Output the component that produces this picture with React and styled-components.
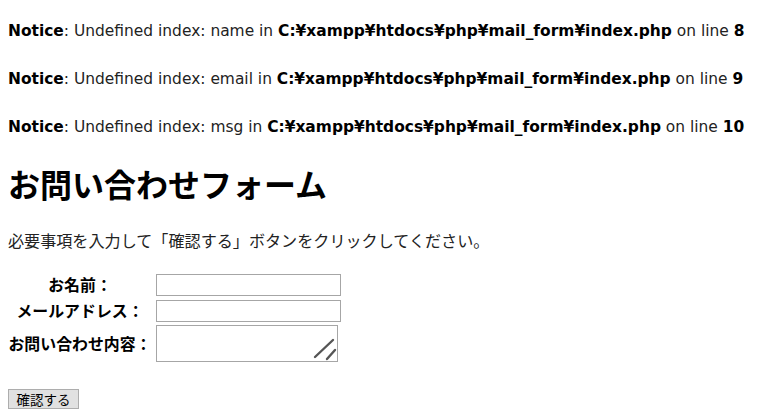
import React from 'react'
import styled, { createGlobalStyle } from 'styled-components'

const GlobalStyle = createGlobalStyle`
  html, body { margin: 0; padding: 0; background: #fff; }
  body {
    font-family: "DejaVu Sans", "Noto Sans CJK JP", sans-serif;
    color: #000;
  }
`

const Page = styled.main`
  padding: 19px 8px 8px;
`

const Notice = styled.div`
  font-size: 15.45px;
  line-height: 24px;
  margin-bottom: 24px;
  color: #222;
  white-space: nowrap;
  b { color: #000; }
`

const Title = styled.h1`
  font-family: "Noto Sans CJK JP", sans-serif;
  font-size: 32px;
  line-height: 40px;
  font-weight: 700;
  margin: 0 0 25px;
`

const Lead = styled.p`
  font-family: "Noto Sans CJK JP", sans-serif;
  font-size: 16.1px;
  line-height: 24px;
  margin: 0 0 21px;
  color: #222;
`

const Form = styled.form`
  display: grid;
  grid-template-columns: 144px auto;
  column-gap: 4px;
  row-gap: 3px;
  justify-content: start;
  align-items: center;
`

const Label = styled.label`
  font-family: "Noto Sans CJK JP", sans-serif;
  font-size: 15.9px;
  font-weight: 700;
  text-align: center;
  white-space: nowrap;
`

const Input = styled.input`
  box-sizing: border-box;
  width: 185px;
  height: 22px;
  margin: 0;
  border: 1px solid #a6a6a6;
  background: #fff;
  padding: 0 3px;
`

const AreaWrap = styled.div`
  position: relative;
  width: 182px;
  height: 37px;
`

const Area = styled.textarea`
  box-sizing: border-box;
  display: block;
  width: 182px;
  height: 37px;
  margin: 0;
  border: 1px solid #a6a6a6;
  resize: none;
`

const Grip = styled.svg`
  position: absolute;
  left: 0;
  top: 0;
  pointer-events: none;
`

const Submit = styled.button`
  margin-top: 27px;
  width: 71px;
  height: 20px;
  padding: 0;
  background: #e1e1e1;
  border: 1px solid #adadad;
  border-radius: 0;
  font-family: "Noto Sans CJK JP", sans-serif;
  font-size: 13.5px;
  line-height: 18px;
  color: #000;
`

const notices = [
  ['name', 8],
  ['email', 9],
  ['msg', 10],
]

export default function App() {
  return (
    <>
      <GlobalStyle />
      <Page>
        {notices.map(([key, line]) => (
          <Notice key={key}>
            <b>Notice</b>: Undefined index: {key} in{' '}
            <b>C:¥xampp¥htdocs¥php¥mail_form¥index.php</b> on line <b>{line}</b>
          </Notice>
        ))}
        <Title>お問い合わせフォーム</Title>
        <Lead>必要事項を入力して「確認する」ボタンをクリックしてください。</Lead>
        <Form onSubmit={(e) => e.preventDefault()}>
          <Label htmlFor="name">お名前：</Label>
          <Input id="name" type="text" />
          <Label htmlFor="email">メールアドレス：</Label>
          <Input id="email" type="text" />
          <Label htmlFor="msg">お問い合わせ内容：</Label>
          <AreaWrap>
            <Area id="msg" />
            <Grip width="182" height="37" viewBox="0 0 182 37">
              <line x1="159" y1="32" x2="177" y2="15" stroke="#555" strokeWidth="2.4" strokeLinecap="round" />
              <line x1="171" y1="34" x2="179" y2="25" stroke="#555" strokeWidth="2.4" strokeLinecap="round" />
            </Grip>
          </AreaWrap>
        </Form>
        <Submit type="submit">確認する</Submit>
      </Page>
    </>
  )
}
